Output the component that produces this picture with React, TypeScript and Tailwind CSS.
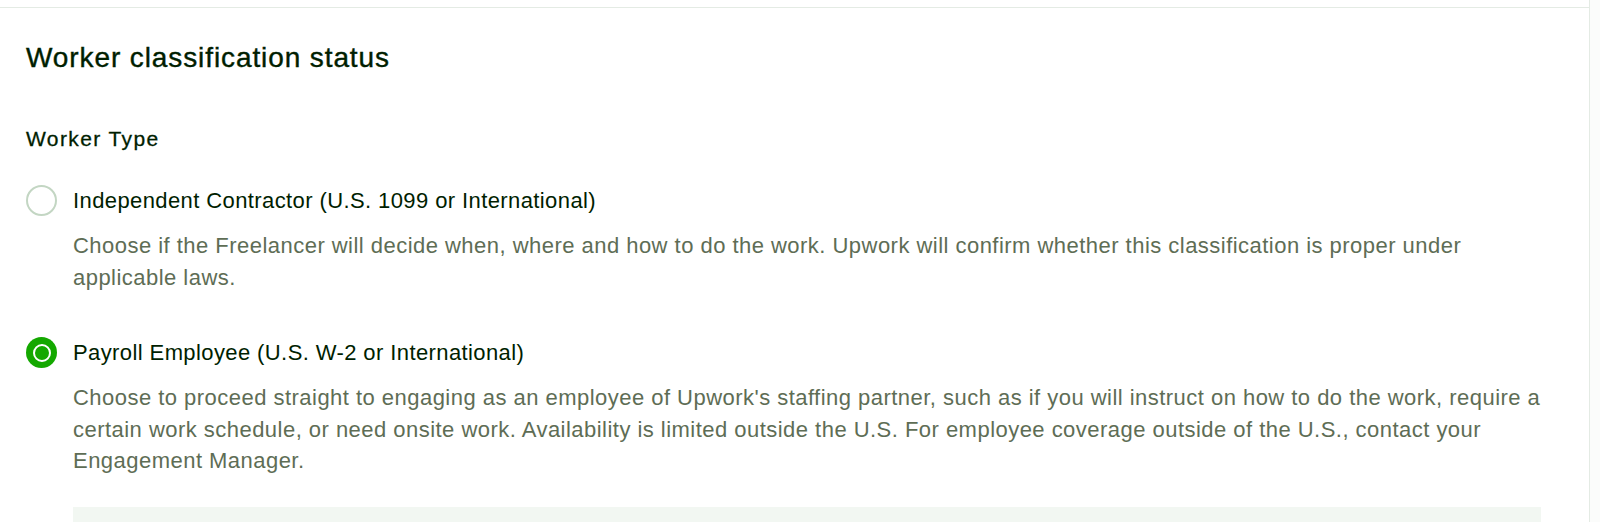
import React from "react";

const font = { fontFamily: '"Liberation Sans", Arial, sans-serif' };

function Radio({ checked }: { checked: boolean }) {
  if (checked) {
    return (
      <span className="flex h-[31px] w-[31px] shrink-0 items-center justify-center rounded-full bg-[#14a800]">
        <span className="h-[18px] w-[18px] rounded-full border-[2.5px] border-white" />
      </span>
    );
  }
  return <span className="block h-[31px] w-[31px] shrink-0 rounded-full border-2 border-[#c3d6c3] bg-white" />;
}

function Option({ checked, label, desc }: { checked: boolean; label: string; desc: string }) {
  return (
    <div className="flex flex-col">
      <div className="flex items-center gap-[16px]">
        <Radio checked={checked} />
        <span className="text-[22px] leading-[28px] tracking-[0.4px] text-[#001e00]">{label}</span>
      </div>
      <p className="mt-[14px] pl-[47px] text-[22px] leading-[31.5px] tracking-[0.47px] text-[#5e6d55]">{desc}</p>
    </div>
  );
}

export default function App() {
  return (
    <div className="flex h-[522px] w-full overflow-hidden bg-white" style={font}>
      <div className="w-[1590px] shrink-0 border-r border-[#e4ebe4] pt-[7px]">
        <div className="border-t border-[#e4ebe4] pl-[26px] pr-[48px] pt-[32px]">
          <h2 className="text-[28px] leading-[36px] tracking-[0.9px] text-[#001e00] [-webkit-text-stroke:0.4px_#001e00]">
            Worker classification status
          </h2>
          <h3 className="mt-[49px] text-[21px] leading-[28px] tracking-[1.4px] text-[#001e00] [-webkit-text-stroke:0.3px_#001e00]">
            Worker Type
          </h3>
          <div className="mt-[32px] flex flex-col gap-[44px]">
            <Option
              checked={false}
              label="Independent Contractor (U.S. 1099 or International)"
              desc="Choose if the Freelancer will decide when, where and how to do the work. Upwork will confirm whether this classification is proper under applicable laws."
            />
            <Option
              checked={true}
              label="Payroll Employee (U.S. W-2 or International)"
              desc="Choose to proceed straight to engaging as an employee of Upwork's staffing partner, such as if you will instruct on how to do the work, require a certain work schedule, or need onsite work. Availability is limited outside the U.S. For employee coverage outside of the U.S., contact your Engagement Manager."
            />
          </div>
          <div className="ml-[47px] mt-[30px] h-[60px] bg-[#f2f7f2]" />
        </div>
      </div>
      <div className="flex-1 bg-[#fbfcfb]" />
    </div>
  );
}
